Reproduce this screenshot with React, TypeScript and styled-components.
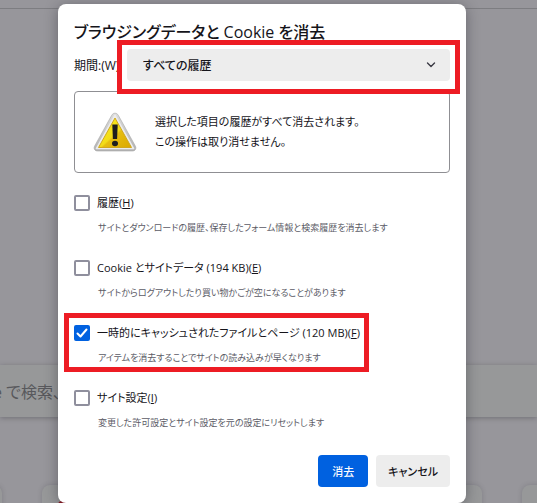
import React, { useState } from "react";
import styled, { createGlobalStyle } from "styled-components";

const GlobalStyle = createGlobalStyle`
  * { box-sizing: border-box; }
  html, body, #root { height: 100%; }
  body {
    margin: 0;
    overflow: hidden;
    background: #97969b;
    color: #15141a;
    font-family: "Open Sans", "Noto Sans CJK JP", sans-serif;
    font-size: 11px;
    font-feature-settings: "palt";
  }
  button, select, input { font: inherit; font-feature-settings: inherit; color: inherit; }
`;

const Page = styled.div`
  position: relative;
  min-height: 100vh;
  overflow: hidden;
`;

const Backdrop = styled.div`
  height: 100vh;
  display: flex;
  flex-direction: column;
  overflow: hidden;
`;

const Toolbar = styled.div`
  flex: none;
  height: 9px;
  border-bottom: 1px solid #7d7d81;
`;

const SearchBar = styled.div`
  flex: none;
  display: flex;
  align-items: center;
  height: 52px;
  margin-top: 356px;
  background: #979899;
  box-shadow: 0 1px 5px rgba(40, 40, 50, 0.35);
  color: #58585c;
  font-size: 16px;
  white-space: nowrap;
`;

const Placeholder = styled.span`
  margin-left: -7px;
`;

const Tiles = styled.div`
  flex: none;
  display: flex;
  gap: 40px;
  margin-top: 68px;
  margin-left: -78px;
`;

const Tile = styled.div`
  flex: none;
  display: flex;
  justify-content: center;
  padding-top: 16px;
  width: 80px;
  height: 80px;
  border-radius: 8px;
  background: #979899;
  box-shadow: 0 0 5px rgba(40, 40, 50, 0.2);
`;

const TileMark = styled.div`
  width: 48px;
  height: 48px;
  border-radius: 4px;
  background: #8d1520;
`;

const Overlay = styled.div`
  position: absolute;
  inset: 0;
  padding: 4px 71px 0 58px;
`;

const Dialog = styled.form`
  display: flex;
  flex-direction: column;
  padding: 16px;
  border-radius: 8px;
  background: #fff;
  box-shadow: 0 2px 14px rgba(30, 30, 40, 0.4);
`;

const Title = styled.h1`
  margin: 0;
  height: 24px;
  line-height: 24px;
  font-size: 16px;
  font-weight: 500;
  white-space: nowrap;
`;

const PeriodRow = styled.div`
  display: flex;
  align-items: center;
  margin-top: 5px;
  font-size: 12px;
`;

const PeriodLabel = styled.label`
  flex: none;
  width: 53px;
  white-space: nowrap;
`;

const SelectWrap = styled.div`
  position: relative;
  flex: 1;
  display: flex;
`;

const Select = styled.select`
  appearance: none;
  flex: 1;
  height: 32px;
  padding: 0 32px 0 16px;
  border: 0;
  border-radius: 4px;
  background: #ededed;
  font-weight: 500;
`;

const Chevron = styled.svg`
  position: absolute;
  right: 14px;
  top: 12px;
  pointer-events: none;
`;

const Highlight = styled.div<{ $inset: string }>`
  position: absolute;
  inset: ${(p) => p.$inset};
  border: 5px solid #ed1c24;
  pointer-events: none;
`;

const Warning = styled.div`
  display: flex;
  align-items: center;
  gap: 18px;
  height: 82px;
  margin-top: 10px;
  padding: 0 18px;
  border: 1px solid #8f8f93;
  border-radius: 4px;
`;

const WarningText = styled.p`
  margin: 0;
  line-height: 20px;
`;

const Options = styled.div`
  display: flex;
  flex-direction: column;
  gap: 21px;
  margin-top: 20px;
`;

const Option = styled.div`
  position: relative;
  display: flex;
  flex-direction: column;
  gap: 6px;
`;

const OptionLabel = styled.label`
  display: flex;
  align-items: center;
  gap: 7px;
  height: 20px;
  line-height: 20px;
  white-space: nowrap;
`;

const Box = styled.span`
  position: relative;
  display: flex;
  width: 16px;
  height: 16px;
`;

const Check = styled.input`
  appearance: none;
  width: 16px;
  height: 16px;
  margin: 0;
  border: 2px solid #8f8f9d;
  border-radius: 2px;
  background: #fff;
  &:checked {
    border-color: #0061e0;
    background: #0061e0;
  }
`;

const Tick = styled.svg`
  position: absolute;
  inset: 0;
  pointer-events: none;
`;

const Hint = styled.p`
  margin: 0 0 0 24px;
  height: 18px;
  line-height: 18px;
  font-size: 9px;
  color: #5b5b66;
  white-space: nowrap;
`;

const Actions = styled.div`
  display: flex;
  justify-content: flex-end;
  gap: 8px;
  margin-top: 23px;
`;

const Button = styled.button<{ $primary?: boolean }>`
  height: 32px;
  min-width: 50px;
  padding: 0 12px;
  border: 0;
  border-radius: 4px;
  font-weight: 500;
  background: ${(p) => (p.$primary ? "#0061e0" : "#ededed")};
  color: ${(p) => (p.$primary ? "#fbfbfe" : "#15141a")};
`;

function WarningIcon() {
  return (
    <svg width="44" height="40" viewBox="0 0 44 40" aria-hidden="true">
      <defs>
        <linearGradient id="rim" x1="0" y1="0" x2="0" y2="1">
          <stop offset="0" stopColor="#dcdcdc" />
          <stop offset="1" stopColor="#b2b2b2" />
        </linearGradient>
        <linearGradient id="face" x1="0" y1="0" x2="1" y2="1">
          <stop offset="0" stopColor="#fff01c" />
          <stop offset="0.52" stopColor="#f2dc18" />
          <stop offset="0.56" stopColor="#e6bd10" />
          <stop offset="1" stopColor="#dba900" />
        </linearGradient>
      </defs>
      <path
        d="M22 1.2c1.5 0 2.6.8 3.3 2.1l17 30.6c1.4 2.6 0 5.1-2.9 5.1H4.6C1.7 39 .3 36.5 1.7 33.9l17-30.6C19.4 2 20.5 1.2 22 1.2z"
        fill="url(#rim)"
        stroke="#a4a4a4"
        strokeWidth="0.6"
      />
      <path d="M22 3.2L40.600 36.500H3.400z" fill="#ececec" stroke="#ececec" strokeWidth="1.500" strokeLinejoin="round" />
      <path d="M22 6L38.500 35.500H5.500z" fill="url(#face)" stroke="#d0a820" strokeWidth="1" strokeLinejoin="round" />
      <path d="M19.300 12.500h5.400l-.6 14.500h-4.200z" fill="#1e1e1e" />
      <ellipse cx="22" cy="31.500" rx="3" ry="2.700" fill="#1e1e1e" />
    </svg>
  );
}

type Item = { id: string; text: string; key: string; hint: string; marked?: boolean };

const items: Item[] = [
  { id: "history", text: "履歴", key: "H", hint: "サイトとダウンロードの履歴、保存したフォーム情報と検索履歴を消去します" },
  { id: "cookies", text: "Cookie とサイトデータ (194 KB)", key: "E", hint: "サイトからログアウトしたり買い物かごが空になることがあります" },
  { id: "cache", text: "一時的にキャッシュされたファイルとページ (120 MB)", key: "F", hint: "アイテムを消去することでサイトの読み込みが早くなります", marked: true },
  { id: "settings", text: "サイト設定", key: "I", hint: "変更した許可設定とサイト設定を元の設定にリセットします" },
];

export default function App() {
  const [checked, setChecked] = useState<Record<string, boolean>>({ cache: true });

  return (
    <Page>
      <GlobalStyle />
      <Backdrop>
        <Toolbar />
        <SearchBar>
          <Placeholder>e で検索、</Placeholder>
        </SearchBar>
        <Tiles>
          <Tile />
          <Tile><TileMark /></Tile>
          <Tile />
          <Tile />
          <Tile />
          <Tile />
        </Tiles>
      </Backdrop>
      <Overlay>
        <Dialog role="dialog" aria-labelledby="title" onSubmit={(e) => e.preventDefault()}>
          <Title id="title">ブラウジングデータと Cookie を消去</Title>
          <PeriodRow>
            <PeriodLabel htmlFor="period">期間:(W)</PeriodLabel>
            <SelectWrap>
              <Select id="period">
                <option>すべての履歴</option>
              </Select>
              <Chevron width="10" height="8" viewBox="0 0 10 8" fill="none" aria-hidden="true">
                <path d="M1.500 2L5 5.500L8.500 2" stroke="#3a3944" strokeWidth="1.400" strokeLinecap="round" strokeLinejoin="round" />
              </Chevron>
              <Highlight $inset="-9px -10px -13px -10px" />
            </SelectWrap>
          </PeriodRow>
          <Warning>
            <WarningIcon />
            <WarningText>
              選択した項目の履歴がすべて消去されます。
              <br />
              この操作は取り消せません。
            </WarningText>
          </Warning>
          <Options>
            {items.map((item) => (
              <Option key={item.id}>
                <OptionLabel htmlFor={item.id}>
                  <Box>
                    <Check
                      id={item.id}
                      type="checkbox"
                      checked={!!checked[item.id]}
                      onChange={(e) => setChecked({ ...checked, [item.id]: e.target.checked })}
                    />
                    {checked[item.id] && (
                      <Tick width="16" height="16" viewBox="0 0 16 16" fill="none" aria-hidden="true">
                        <path d="M3.500 8.500L6.500 11.500L12.500 4.500" stroke="#fff" strokeWidth="2" strokeLinecap="round" strokeLinejoin="round" />
                      </Tick>
                    )}
                  </Box>
                  <span>
                    {item.text}(<u>{item.key}</u>)
                  </span>
                </OptionLabel>
                <Hint>{item.hint}</Hint>
                {item.marked && <Highlight $inset="-10px 81px -5px -10px" />}
              </Option>
            ))}
          </Options>
          <Actions>
            <Button type="submit" $primary>消去</Button>
            <Button type="button">キャンセル</Button>
          </Actions>
        </Dialog>
      </Overlay>
    </Page>
  );
}
